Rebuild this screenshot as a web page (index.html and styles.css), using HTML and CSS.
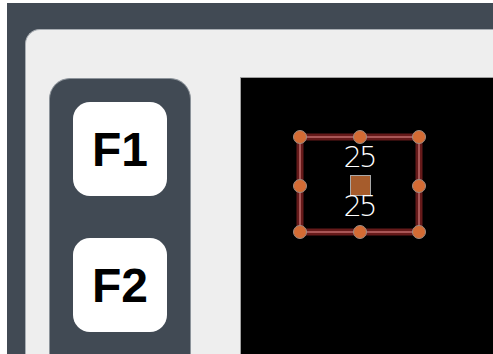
FILE: index.html
```html
<!DOCTYPE html>
<html lang="en">
<head>
    <meta charset="UTF-8">
    <meta name="viewport" content="width=device-width, initial-scale=1.0">
    <title>Editor</title>
    <link rel="stylesheet" href="styles.css">
</head>
<body>

    <div class="frame">
        <div class="panel">
            <div class="sidebar">
                <button class="fkey">F1</button>
                <button class="fkey">F2</button>
            </div>
            <div class="canvas">
                <svg width="252" height="277" viewBox="0 0 252 277">
                    <!-- shape outline -->
                    <rect x="59" y="59" width="119" height="95" fill="none" stroke="#661a1a" stroke-width="7"/>
                    <rect x="59" y="59" width="119" height="95" fill="none" stroke="#a85656" stroke-width="2"/>
                    <!-- handles -->
                    <g class="handle">
                        <circle cx="59" cy="59" r="6.5"/>
                        <circle cx="119" cy="59" r="6.5"/>
                        <circle cx="178" cy="59" r="6.5"/>
                        <circle cx="59" cy="108" r="6.5"/>
                        <circle cx="178" cy="108" r="6.5"/>
                        <circle cx="59" cy="154" r="6.5"/>
                        <circle cx="119" cy="154" r="6.5"/>
                        <circle cx="178" cy="154" r="6.5"/>
                    </g>
                    <text class="dim" x="118" y="89">25</text>
                    <rect x="109.5" y="97.5" width="20" height="20" fill="#a65c2c" stroke="#a8a8a8" stroke-width="1"/>
                    <text class="dim" x="118" y="138">25</text>
                </svg>
            </div>
        </div>
    </div>

</body>
</html>
```

FILE: styles.css
```css
html, body {
    height: 100%;
}
body {
    margin: 0;
    background: #ffffff;
    overflow: hidden;
    font-family: "Liberation Sans", Arial, sans-serif;
}
.frame {
    margin: 3px 0 0 7px;
    height: calc(100% - 3px);
    background: #414a54;
    padding: 26px 0 0 18px;
    box-sizing: border-box;
    display: flex;
}
.panel {
    flex: 1;
    display: flex;
    align-items: stretch;
    gap: 49px;
    background: #eeeeee;
    border-top: 1px solid #a9aeb3;
    border-left: 1px solid #a9aeb3;
    border-top-left-radius: 15px;
    padding: 47px 0 0 23px;
}
.sidebar {
    width: 142px;
    box-sizing: border-box;
    margin-top: 1px;
    display: flex;
    flex-direction: column;
    gap: 42px;
    padding: 23px 23px 0;
    background: #414a54;
    border: 1px solid #8c939a;
    border-bottom: none;
    border-radius: 21px 21px 0 0;
}
.fkey {
    width: 94px;
    height: 94px;
    border: none;
    border-radius: 17px;
    background: #ffffff;
    color: #000000;
    font-family: "Liberation Sans", Arial, sans-serif;
    font-weight: bold;
    font-size: 48px;
    padding: 0;
    cursor: pointer;
}
.canvas {
    flex: 1;
    background: #000000;
    border-top: 1px solid #a0a0a0;
    border-left: 1px solid #a0a0a0;
}
.canvas svg {
    display: block;
}
.handle circle {
    fill: #d36b34;
    stroke: #9c8c84;
    stroke-width: 1;
}
.dim {
    fill: #ffffff;
    font-family: "DejaVu Sans ExtraLight", "DejaVu Sans", sans-serif;
    font-weight: 200;
    font-size: 29px;
    text-anchor: middle;
    letter-spacing: -3px;
}
```
